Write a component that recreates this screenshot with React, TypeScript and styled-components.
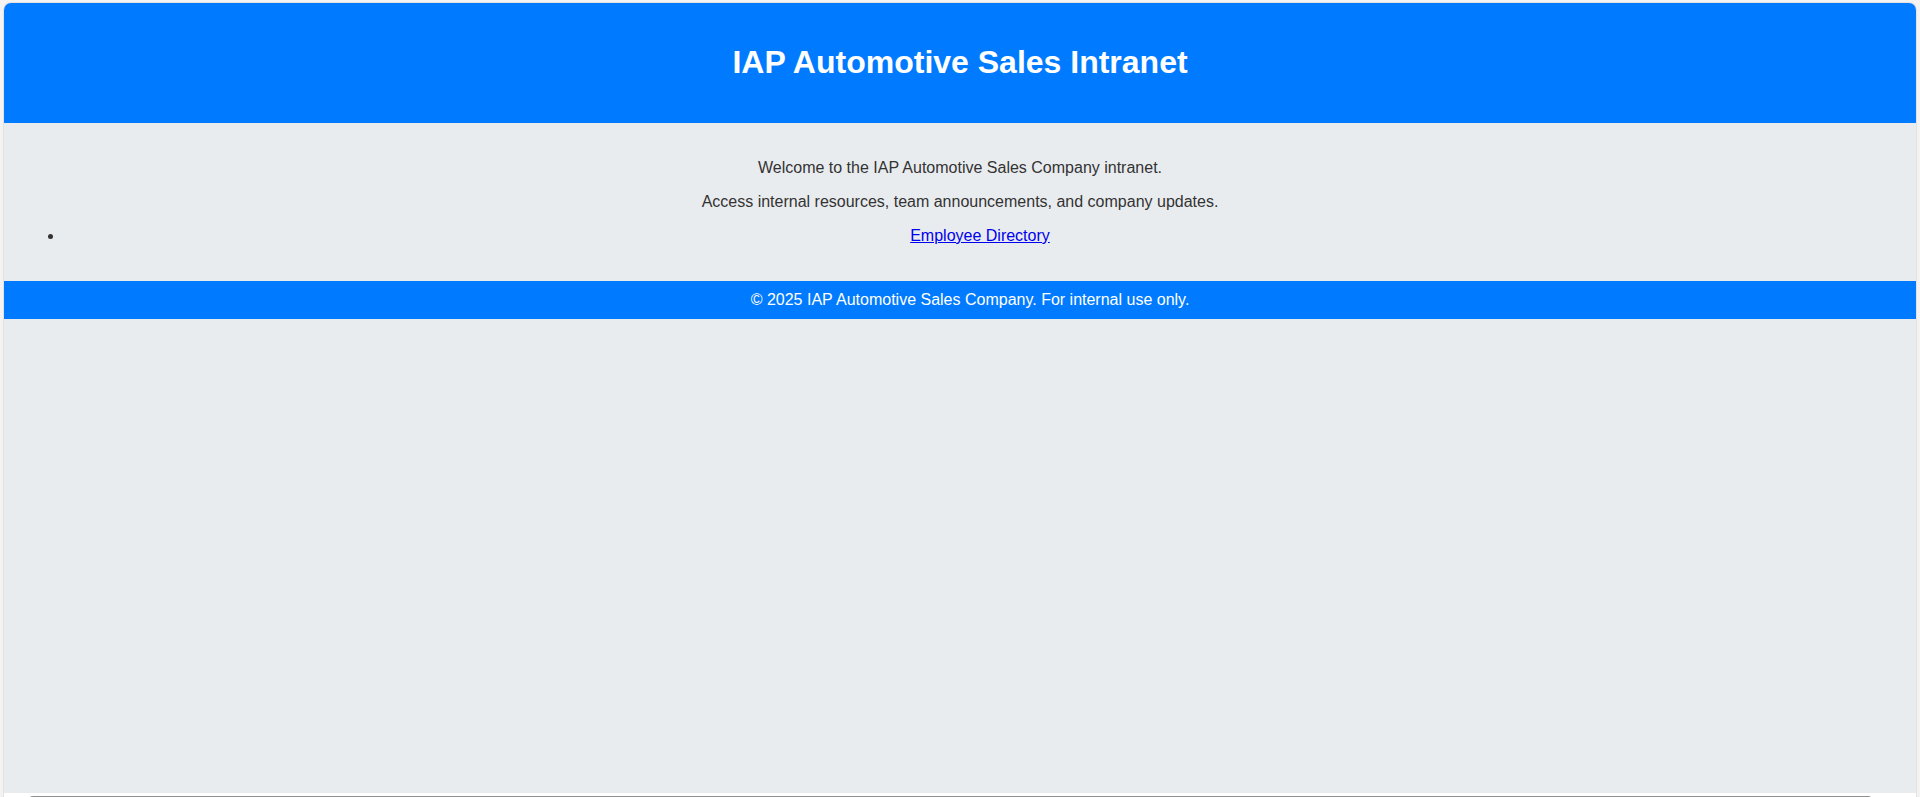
import React from "react";
import styled, { createGlobalStyle } from "styled-components";

const GlobalStyle = createGlobalStyle`
  html, body {
    margin: 0;
    padding: 0;
    height: 797px;
    overflow: hidden;
    background: #f3f3f3;
    font-family: "Liberation Sans", Arial, sans-serif;
  }
`;

const Window = styled.div`
  margin: 2px 0 0 3px;
  width: 1912px;
  height: 807px;
  border: 1px solid #e2e2e2;
  border-bottom: none;
  border-radius: 8px 8px 0 0;
  overflow: hidden;
  display: flex;
  flex-direction: column;
  background: #e9ecef;
`;

const Viewport = styled.div`
  height: 790px;
  flex: none;
  overflow: hidden;
  background: #e9ecef;
  color: #333;
  font-size: 16px;
`;

const Header = styled.header`
  background: #007bff;
  color: #fff;
  padding: 20px;
  text-align: center;
`;

const Title = styled.h1`
  font-size: 32px;
  font-weight: bold;
  margin: 21.44px 0;
  line-height: normal;
`;

const Main = styled.main`
  padding: 20px;
  text-align: center;
`;

const Text = styled.p`
  margin: 16px 0;
`;

const LinkList = styled.ul`
  margin: 16px 0;
  padding-left: 40px;
`;

const Link = styled.a`
  color: #0000ee;
  text-decoration: underline;
`;

const Footer = styled.footer`
  background: #007bff;
  color: #fff;
  padding: 10px 0 10px 20px;
  text-align: center;
`;

const Scrollbar = styled.div`
  flex: none;
  height: 17px;
  background: #fff;
  position: relative;
  display: flex;
  align-items: flex-start;
  padding: 3px 0 0 25px;
  box-sizing: border-box;
`;

const Arrow = styled.span<{ $side: "left" | "right" }>`
  position: absolute;
  top: 6px;
  ${(p) => (p.$side === "left" ? "left: 10px;" : "right: 11px;")}
  width: 0;
  height: 0;
  border-top: 4px solid transparent;
  border-bottom: 4px solid transparent;
  ${(p) =>
    p.$side === "left"
      ? "border-right: 4px solid #505050;"
      : "border-left: 4px solid #505050;"}
`;

const Thumb = styled.div`
  width: 1843px;
  height: 8px;
  border-radius: 4px;
  background: #8f8f8f;
`;

export default function App() {
  return (
    <>
      <GlobalStyle />
      <Window>
        <Viewport>
          <Header>
            <Title>IAP Automotive Sales Intranet</Title>
          </Header>
          <Main>
            <Text>Welcome to the IAP Automotive Sales Company intranet.</Text>
            <Text>Access internal resources, team announcements, and company updates.</Text>
            <LinkList>
              <li>
                <Link href="#">Employee Directory</Link>
              </li>
            </LinkList>
          </Main>
          <Footer>© 2025 IAP Automotive Sales Company. For internal use only.</Footer>
        </Viewport>
        <Scrollbar>
          <Arrow $side="left" />
          <Thumb />
          <Arrow $side="right" />
        </Scrollbar>
      </Window>
    </>
  );
}
